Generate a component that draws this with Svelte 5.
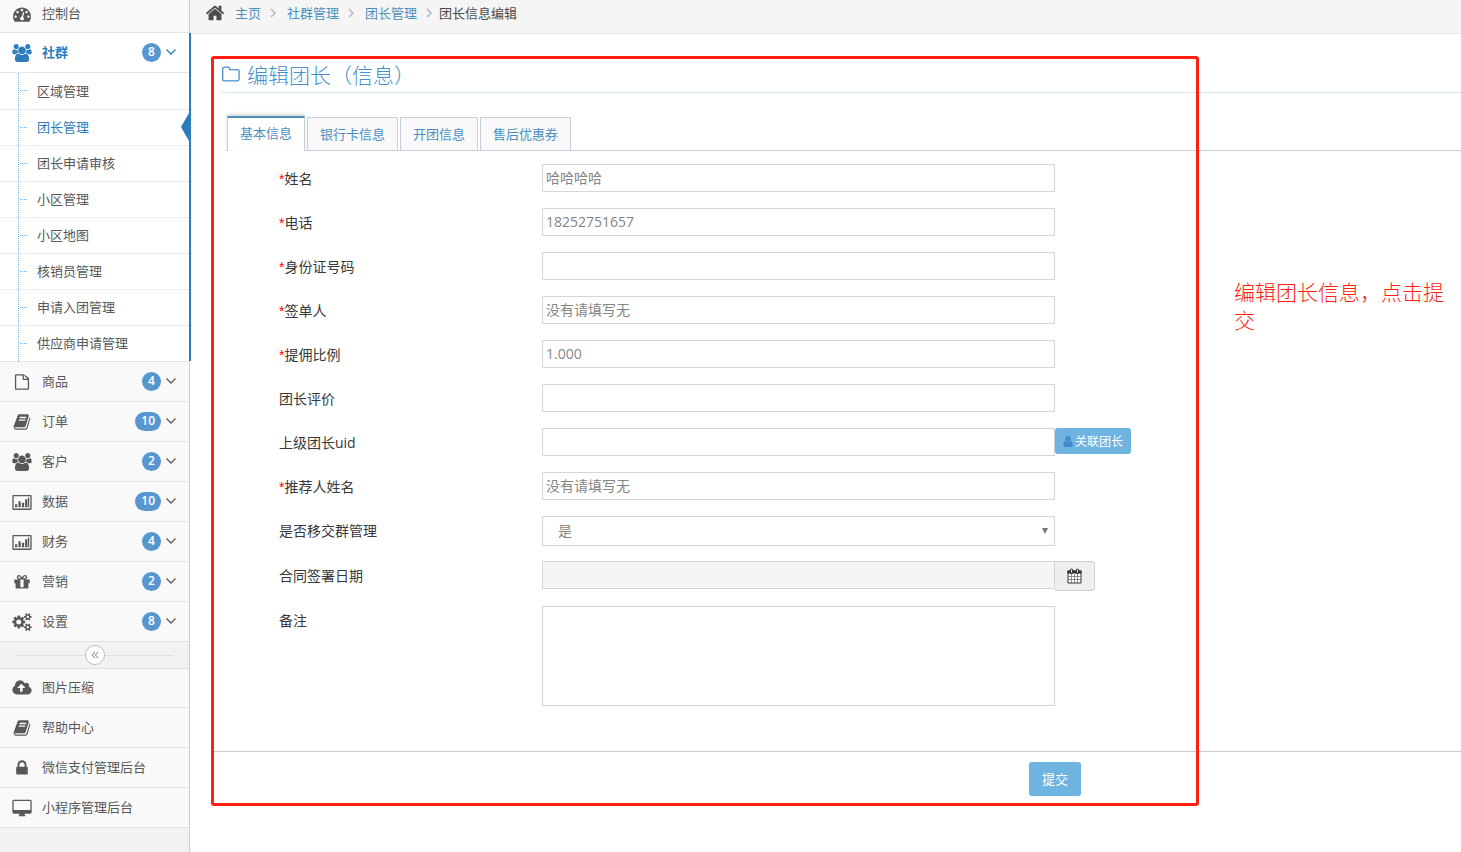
<script>
  const paths = {
    dashboard:
      'M384 1152q0-53-37.5-90.5t-90.5-37.5-90.5 37.5-37.5 90.5 37.5 90.5 90.5 37.5 90.5-37.5 37.5-90.5zm192-448q0-53-37.5-90.5t-90.5-37.5-90.5 37.5-37.5 90.5 37.5 90.5 90.5 37.5 90.5-37.5 37.5-90.5zm428 481l101-382q6-26-7.5-48.5t-38.5-29.5-48 6.5-30 39.5l-101 382q-60 5-107 43.5t-63 98.5q-20 77 20 146t117 89 146-20 89-117q16-60-6-117t-72-91zm660-33q0-53-37.5-90.5t-90.5-37.5-90.5 37.5-37.5 90.5 37.5 90.5 90.5 37.5 90.5-37.5 37.5-90.5zm-640-640q0-53-37.5-90.5t-90.5-37.5-90.5 37.5-37.5 90.5 37.5 90.5 90.5 37.5 90.5-37.5 37.5-90.5zm448 192q0-53-37.5-90.5t-90.5-37.5-90.5 37.5-37.5 90.5 37.5 90.5 90.5 37.5 90.5-37.5 37.5-90.5zm320 448q0 261-141 483-19 29-54 29h-1402q-35 0-54-29-141-221-141-483 0-182 71-348t191-286 286-191 348-71 348 71 286 191 191 286 71 348z',
    group:
      'M593 896q-162 5-265 128h-134q-82 0-138-40.5t-56-118.5q0-353 124-353 6 0 43.5 21t97.5 42.5 119 21.5q67 0 133-23-5 37-5 66 0 159 81 256zm1071 637q0 120-73 189.5t-194 69.5h-874q-121 0-194-69.5t-73-189.5q0-53 3.5-103.5t14-109 26.5-108.5 43-97.5 62-81 85.5-53.5 111.5-20q10 0 43 21.5t73 48 107 48 135 21.5 135-21.5 107-48 73-48 43-21.5q61 0 111.5 20t85.5 53.5 62 81 43 97.5 26.5 108.5 14 109 3.5 103.5zm-1024-1277q0 106-75 181t-181 75-181-75-75-181 75-181 181-75 181 75 75 181zm704 384q0 159-112.5 271.5t-271.5 112.5-271.5-112.5-112.5-271.5 112.5-271.5 271.5-112.5 271.5 112.5 112.5 271.5zm576 225q0 78-56 118.5t-138 40.5h-134q-103-123-265-128 81-97 81-256 0-29-5-66 66 23 133 23 59 0 119-21.5t97.5-42.5 43.5-21q124 0 124 353zm-128-609q0 106-75 181t-181 75-181-75-75-181 75-181 181-75 181 75 75 181z',
    file:
      'M1532 444q28 28 48 76t20 88v960q0 40-28 68t-68 28h-1216q-40 0-68-28t-28-68v-1344q0-40 28-68t68-28h704q40 0 88 20t76 48zm-444-180v312h312q-10-29-22-41l-249-249q-12-12-41-22zm384 1272v-832h-416q-40 0-68-28t-28-68v-352h-640v1280h1152z',
    book:
      'M1703 478q40 57 18 129l-275 906q-19 64-76.5 107.5t-122.5 43.5h-923q-77 0-148.5-53.5t-99.5-131.5q-24-67-2-127 0-4 3-27t4-37q1-8-3-21.5t-3-19.5q2-11 8-21t16.5-23.5 16.5-23.5q23-38 45-91.5t30-91.5q3-10 .5-30t-.5-28q3-11 17-28t17-23q21-36 42-92t25-90q1-9-2.5-32t.5-28q4-13 22-30.5t22-22.5q19-26 42.5-84.5t27.5-96.5q1-8-3-25.5t-2-26.5q2-8 9-18t18-23 17-21q8-12 16.5-30.5t15-35 16-36 19.5-32 26.5-23.5 36-11.5 47.5 5.5l-1 3q38-9 51-9h761q74 0 114 56t18 130l-274 906q-36 119-71.5 153.5t-128.5 34.5h-869q-27 0-38 15-11 16-1 43 24 70 144 70h923q29 0 56-15.5t35-41.5l300-987q7-22 5-57 38 15 59 43zm-1064 2q-4 13 2 22.5t20 9.5h608q13 0 25.5-9.5t16.5-22.5l21-64q4-13-2-22.5t-20-9.5h-608q-13 0-25.5 9.5t-16.5 22.5zm-83 256q-4 13 2 22.5t20 9.5h608q13 0 25.5-9.5t16.5-22.5l21-64q4-13-2-22.5t-20-9.5h-608q-13 0-25.5 9.5t-16.5 22.5z',
    chart:
      'M100 190h1720q100 0 100 100v1290q0 100-100 100h-1720q-100 0-100-100v-1290q0-100 100-100zm30 130v1230h1660v-1230zM270 1130h220v290h-220zM610 830h220v590h-220zM950 980h220v440h-220zM1270 620h220v800h-220zM1550 440h130v980h-130z',
    gift:
      'M1056 1356v-716h-320v716q0 25 18 38.5t46 13.5h192q28 0 46-13.5t18-38.5zm-456-844h195l-126-161q-26-31-69-31-40 0-68 28t-28 68 28 68 68 28zm688-96q0-40-28-68t-68-28q-43 0-69 31l-125 161h194q40 0 68-28t28-68zm376 256v320q0 14-9 23t-23 9h-96v416q0 40-28 68t-68 28h-1088q-40 0-68-28t-28-68v-416h-96q-14 0-23-9t-9-23v-320q0-14 9-23t23-9h440q-93 0-158.5-65.5t-65.5-158.5 65.5-158.5 158.5-65.5q107 0 168 77l128 165 128-165q61-77 168-77 93 0 158.5 65.5t65.5 158.5-65.5 158.5-158.5 65.5h440q14 0 23 9t9 23z',
    cogs:
      'M896 896q0-106-75-181t-181-75-181 75-75 181 75 181 181 75 181-75 75-181zm768 512q0-52-38-90t-90-38-90 38-38 90q0 53 37.5 90.5t90.5 37.5 90.5-37.5 37.5-90.5zm0-1024q0-52-38-90t-90-38-90 38-38 90q0 53 37.5 90.5t90.5 37.5 90.5-37.5 37.5-90.5zm-384 421v185q0 10-7 19.5t-16 10.5l-155 24q-11 35-32 76 34 48 90 115 7 11 7 20 0 12-7 19-23 30-82.5 89.5t-78.5 59.5q-11 0-21-7l-115-90q-37 19-77 31-11 108-23 155-7 24-30 24h-186q-11 0-20-7.5t-10-17.5l-23-153q-34-10-75-31l-118 89q-7 7-20 7-11 0-21-8-144-133-144-160 0-9 7-19 10-14 41-53t47-61q-23-44-35-82l-152-24q-10-1-17-9.5t-7-19.5v-185q0-10 7-19.5t16-10.5l155-24q11-35 32-76-34-48-90-115-7-11-7-20 0-12 7-20 22-30 82-89t79-59q11 0 21 7l115 90q34-18 77-32 11-108 23-154 7-24 30-24h186q11 0 20 7.5t10 17.5l23 153q34 10 75 31l118-89q8-7 20-7 11 0 21 8 144 133 144 160 0 9-7 19-12 16-42 54t-45 60q23 48 34 82l152 23q10 2 17 10.5t7 19.5zm640 533v140q0 16-149 31-12 27-30 52 51 113 51 138 0 4-4 7-122 71-124 71-8 0-46-47t-52-68q-20 2-30 2t-30-2q-14 21-52 68t-46 47q-2 0-124-71-4-3-4-7 0-25 51-138-18-25-30-52-149-15-149-31v-140q0-16 149-31 13-29 30-52-51-113-51-138 0-4 4-7 4-2 35-20t59-34 30-16q8 0 46 46.5t52 67.5q20-2 30-2t30 2q51-71 92-112l6-2q4 0 124 70 4 3 4 7 0 25-51 138 17 23 30 52 149 15 149 31zm0-1024v140q0 16-149 31-12 27-30 52 51 113 51 138 0 4-4 7-122 71-124 71-8 0-46-47t-52-68q-20 2-30 2t-30-2q-14 21-52 68t-46 47q-2 0-124-71-4-3-4-7 0-25 51-138-18-25-30-52-149-15-149-31v-140q0-16 149-31 13-29 30-52-51-113-51-138 0-4 4-7 4-2 35-20t59-34 30-16q8 0 46 46.5t52 67.5q20-2 30-2t30 2q51-71 92-112l6-2q4 0 124 70 4 3 4 7 0 25-51 138 17 23 30 52 149 15 149 31z',
    cloud:
      'M1280 864q0-14-9-23l-352-352q-9-9-23-9t-23 9l-351 351q-10 12-10 24 0 14 9 23t23 9h224v352q0 13 9.5 22.5t22.5 9.5h192q13 0 22.5-9.5t9.5-22.5v-352h224q13 0 22.5-9.5t9.5-22.5zm640 288q0 159-112.5 271.5t-271.5 112.5h-1088q-185 0-316.5-131.5t-131.5-316.5q0-130 70-240t188-165q-2-30-2-43 0-212 150-362t362-150q156 0 285.5 87t188.5 231q71-62 166-62 106 0 181 75t75 181q0 76-41 138 130 31 213.5 135.5t83.5 238.5z',
    lock:
      'M640 768h512v-192q0-106-75-181t-181-75-181 75-75 181v192zm832 96v576q0 40-28 68t-68 28h-960q-40 0-68-28t-28-68v-576q0-40 28-68t68-28h32v-192q0-184 132-316t316-132 316 132 132 316v192h32q40 0 68 28t28 68z',
    desktop:
      'M1792 1056v-832q0-13-9.5-22.5t-22.5-9.5h-1600q-13 0-22.5 9.5t-9.5 22.5v832q0 13 9.5 22.5t22.5 9.5h1600q13 0 22.5-9.5t9.5-22.5zm128-832v1088q0 66-47 113t-113 47h-544q0 37 16 77.5t32 71 16 43.5q0 26-19 45t-45 19h-512q-26 0-45-19t-19-45q0-14 16-44t32-70 16-78h-544q-66 0-113-47t-47-113v-1088q0-66 47-113t113-47h1600q66 0 113 47t47 113z',
    home:
      'M1472 992v480q0 26-19 45t-45 19h-384v-384h-256v384h-384q-26 0-45-19t-19-45v-480q0-1 .5-3t.5-3l575-474 575 474q1 2 1 6zm223-69l-62 74q-8 9-21 11h-3q-13 0-21-7l-692-577-692 577q-12 8-24 7-13-2-21-11l-62-74q-8-10-7-23.5t11-21.5l719-599q32-26 76-26t76 26l244 204v-195q0-14 9-23t23-9h192q14 0 23 9t9 23v408l219 182q10 8 11 21.5t-7 23.5z',
    user:
      'M1536 1399q0 109-62.5 187t-150.5 78h-854q-88 0-150.5-78t-62.5-187q0-85 8.5-160.5t31.5-152 58.5-131 94-89 134.5-34.5q131 128 313 128t313-128q76 0 134.5 34.5t94 89 58.5 131 31.5 152 8.5 160.5zm-256-887q0 159-112.5 271.5t-271.5 112.5-271.5-112.5-112.5-271.5 112.5-271.5 271.5-112.5 271.5 112.5 112.5 271.5z'
  };
  const wide = ['group', 'chart', 'cogs', 'cloud', 'desktop'];

  const community = ['区域管理', '团长管理', '团长申请审核', '小区管理', '小区地图', '核销员管理', '申请入团管理', '供应商申请管理'];
  const modules = [
    { icon: 'file', text: '商品', count: 4 },
    { icon: 'book', text: '订单', count: 10 },
    { icon: 'group', text: '客户', count: 2 },
    { icon: 'chart', text: '数据', count: 10 },
    { icon: 'chart', text: '财务', count: 4 },
    { icon: 'gift', text: '营销', count: 2 },
    { icon: 'cogs', text: '设置', count: 8 }
  ];
  const tools = [
    { icon: 'cloud', text: '图片压缩' },
    { icon: 'book', text: '帮助中心' },
    { icon: 'lock', text: '微信支付管理后台' },
    { icon: 'desktop', text: '小程序管理后台' }
  ];
  const tabs = ['基本信息', '银行卡信息', '开团信息', '售后优惠券'];
  let activeTab = $state(0);

  let fields = $state([
    { id: 'name', label: '姓名', required: true, value: '哈哈哈哈' },
    { id: 'phone', label: '电话', required: true, value: '18252751657' },
    { id: 'idcard', label: '身份证号码', required: true, value: '' },
    { id: 'signer', label: '签单人', required: true, value: '没有请填写无' },
    { id: 'rate', label: '提佣比例', required: true, value: '1.000' },
    { id: 'review', label: '团长评价', required: false, value: '' },
    { id: 'parent', label: '上级团长uid', required: false, value: '', link: true },
    { id: 'referrer', label: '推荐人姓名', required: true, value: '没有请填写无' }
  ]);
</script>

{#snippet icon(name)}
  <svg class="icon" viewBox={wide.includes(name) ? '0 0 1920 1792' : '-64 0 1920 1792'} aria-hidden="true">
    <path d={paths[name]} fill="currentColor" fill-rule={name === 'chart' ? 'evenodd' : 'nonzero'} />
  </svg>
{/snippet}

{#snippet entry(name, text, count)}
  <a class="entry" href="#top">
    {@render icon(name)}
    <span class="entry-text">{text}</span>
    {#if count}
      <span class="badge">{count}</span>
      <svg class="arrow" viewBox="0 0 12 10" aria-hidden="true"><path d="M1.500 1.500L6 6l4.500-4.500" fill="none" stroke="currentColor" stroke-width="1.300" /></svg>
    {/if}
  </a>
{/snippet}

<div class="page" id="top">
  <nav class="sidebar">
    <ul class="menu">
      <li class="first">{@render entry('dashboard', '控制台')}</li>
      <li class="open">
        {@render entry('group', '社群', 8)}
        <ul class="submenu">
          {#each community as text, i}
            <li class:current={i === 1}><a href="#top">{text}</a></li>
          {/each}
        </ul>
      </li>
      {#each modules as m}
        <li>{@render entry(m.icon, m.text, m.count)}</li>
      {/each}
    </ul>
    <div class="collapse">
      <button type="button" aria-label="收起菜单">
        <svg viewBox="0 0 10 10" aria-hidden="true"><path d="M5 1L1.500 5L5 9M9 1L5.500 5L9 9" fill="none" stroke="#999" stroke-width="1.3" /></svg>
      </button>
    </div>
    <ul class="menu tools">
      {#each tools as t}
        <li>{@render entry(t.icon, t.text)}</li>
      {/each}
    </ul>
  </nav>

  <div class="main">
    <nav class="crumbs">
      {@render icon('home')}
      {#each ['主页', '社群管理', '团长管理'] as text}
        <a href="#top">{text}</a>
        <svg class="sep" viewBox="0 0 6 10" aria-hidden="true"><path d="M1 1l4 4-4 4" fill="none" stroke="#b2b6bf" stroke-width="1.5" /></svg>
      {/each}
      <span>团长信息编辑</span>
    </nav>

    <main class="content">
      <h1>
        <svg class="folder" viewBox="0 0 18 16" aria-hidden="true">
          <path d="M.7 13V3q0-1.800 1.800-1.800h3.500q1.700 0 1.700 1.800v.6h7.600q1.800 0 1.800 1.800V13q0 1.800-1.800 1.800H2.500Q.7 14.800.7 13z" fill="none" stroke="currentColor" stroke-width="1.300" />
        </svg>
        <span>编辑团长（信息）</span>
      </h1>

      <div class="tabs" role="tablist">
        {#each tabs as tab, i}
          <button type="button" role="tab" aria-selected={activeTab === i} class:active={activeTab === i} onclick={() => (activeTab = i)}>{tab}</button>
        {/each}
      </div>

      <form onsubmit={(e) => e.preventDefault()}>
        <div class="rows">
          {#each fields as f}
            <div class="row">
              <label for={f.id}>{#if f.required}<i>*</i>{/if}{f.label}</label>
              <input id={f.id} type="text" bind:value={f.value} />
              {#if f.link}
                <div><button class="link" type="button">{@render icon('user')}关联团长</button></div>
              {/if}
            </div>
          {/each}
        </div>
        <div class="rows compact">
          <div class="row">
            <label for="handover">是否移交群管理</label>
            <div class="select">
              <select id="handover"><option>是</option><option>否</option></select>
            </div>
          </div>
          <div class="row">
            <label for="date">合同签署日期</label>
            <input id="date" type="text" readonly />
            <div>
              <button class="addon" type="button" aria-label="选择日期">
                <svg viewBox="0 0 15 16" aria-hidden="true">
                  <path d="M1 3h13v12H1z" fill="#fff" stroke="#333" />
                  <path d="M.5 2.500h14v3H.5z" fill="#333" />
                  <path d="M4.500 2v2.500M10.500 2v2.500" stroke="#333" stroke-width="3" stroke-linecap="round" />
                  <path d="M4.500 1.500v3M10.500 1.500v3" stroke="#eee" stroke-width="1" />
                  <path d="M4.500 6v9M7.500 6v9M10.500 6v9M1 8.500h13M1 11.500h13" stroke="#666" stroke-width=".7" />
                </svg>
              </button>
            </div>
          </div>
          <div class="row">
            <label for="remark">备注</label>
            <textarea id="remark"></textarea>
          </div>
        </div>
        <div class="actions">
          <button class="submit" type="submit">提交</button>
        </div>
      </form>

      <div class="frame" aria-hidden="true"></div>
      <p class="note">编辑团长信息，点击提交</p>
    </main>
  </div>
</div>

<style>
  :global(body) {
    margin: 0;
    background: #fff;
    color: #393939;
    font: 13px/20px 'Open Sans', 'Noto Sans CJK SC', sans-serif;
  }
  * {
    box-sizing: border-box;
  }
  a {
    color: inherit;
    text-decoration: none;
  }
  ul {
    list-style: none;
    margin: 0;
    padding: 0;
  }
  button,
  input,
  select,
  textarea {
    font: inherit;
    margin: 0;
  }
  button {
    cursor: pointer;
  }
  .page {
    display: flex;
    min-height: 100vh;
  }

  .sidebar {
    flex: 0 0 190px;
    background: #f2f2f2;
    border-right: 1px solid #ccc;
    color: #585858;
  }
  .icon {
    width: 20px;
    height: 18px;
    flex: none;
  }
  .menu > li {
    border-top: 1px solid #e5e5e5;
    background: #f9f9f9;
  }
  .entry {
    display: flex;
    align-items: center;
    height: 39px;
    padding: 0 12px;
  }
  .entry-text {
    flex: 1;
    margin-left: 10px;
    padding-bottom: 2px;
  }
  .badge {
    min-width: 19px;
    height: 19px;
    padding: 0 6px;
    border-radius: 10px;
    background: #5896cf;
    color: #fff;
    font-size: 12px;
    font-weight: 600;
    line-height: 18px;
    text-align: center;
  }
  .arrow {
    width: 12px;
    height: 10px;
    margin-left: 4px;
  }
  .menu > .first {
    border-top: 0;
  }
  .first .entry {
    height: 32px;
    padding-bottom: 5px;
  }
  .menu > .open {
    position: relative;
    background: #fff;
  }
  .open::after {
    content: '';
    position: absolute;
    top: 0;
    bottom: 0;
    right: -2px;
    width: 2px;
    background: #2b7dbc;
  }
  .open > .entry {
    color: #2b7dbc;
    font-weight: 700;
  }
  .submenu {
    position: relative;
    border-top: 1px solid #e5e5e5;
  }
  .submenu::before {
    content: '';
    position: absolute;
    top: 0;
    bottom: 0;
    left: 18px;
    border-left: 1px dotted #7fb0d5;
  }
  .submenu li {
    position: relative;
    height: 36px;
    padding: 8px 0 0 37px;
  }
  .submenu li + li {
    border-top: 1px dotted #ddd;
    padding-top: 7px;
  }
  .submenu li::before {
    content: '';
    position: absolute;
    left: 20px;
    top: 17px;
    width: 7px;
    border-top: 1px dotted #7fb0d5;
  }
  .submenu .current {
    color: #2b7dbc;
  }
  .submenu .current::after {
    content: '';
    position: absolute;
    right: 0;
    top: 3px;
    border: 14px solid transparent;
    border-width: 14px 8px 14px 0;
    border-right-color: #2b7dbc;
  }
  .collapse {
    display: flex;
    align-items: center;
    justify-content: center;
    height: 28px;
    border: solid #e0e0e0;
    border-width: 1px 0;
    background: linear-gradient(#e0e0e0, #e0e0e0) center / calc(100% - 30px) 1px no-repeat;
  }
  .collapse button {
    display: flex;
    align-items: center;
    justify-content: center;
    width: 20px;
    height: 20px;
    padding: 0;
    border: 1px solid #bbb;
    border-radius: 50%;
    background: #fff;
  }
  .collapse svg {
    width: 8px;
    height: 8px;
  }
  .tools > li {
    border-top: 0;
    border-bottom: 1px solid #e5e5e5;
  }
  .tools > li:first-child .entry {
    height: 38px;
  }

  .main {
    flex: 1;
    min-width: 0;
  }
  .crumbs {
    display: flex;
    align-items: center;
    height: 34px;
    padding: 0 14px 7px;
    border-bottom: 1px solid #e5e5e5;
    background: #f5f5f5;
    color: #4c4c4c;
  }
  .crumbs .icon {
    width: 22px;
    height: 20px;
  }
  .crumbs a {
    color: #4c8fbd;
    margin-left: 9px;
  }
  .crumbs .sep {
    width: 6px;
    height: 10px;
    margin-left: 9px;
  }
  .crumbs .sep + a {
    margin-left: 11px;
  }
  .crumbs .sep + span {
    margin-left: 7px;
  }
  .content {
    position: relative;
    padding: 26px 0 0 32px;
  }
  h1 {
    display: flex;
    align-items: center;
    gap: 7px;
    height: 33px;
    margin: 0;
    padding-bottom: 5px;
    border-bottom: 1px solid #d5e3ef;
    color: #478fca;
    font-family: 'Noto Sans CJK TC', sans-serif;
    font-size: 21px;
    font-weight: 300;
    line-height: 28px;
  }
  .folder {
    width: 18px;
    height: 16px;
  }
  .tabs {
    display: flex;
    align-items: flex-end;
    gap: 2px;
    height: 35px;
    margin: 23px 0 0 3px;
    padding-left: 2px;
    border-bottom: 1px solid #c5d0dc;
  }
  .tabs button {
    height: 33px;
    padding: 0 12px 1px;
    border: 1px solid #c5d0dc;
    border-bottom: 0;
    background: #f9f9f9;
    color: #4c8fbd;
  }
  .tabs .active {
    height: 35px;
    margin-bottom: -1px;
    padding-bottom: 3px;
    border-top: 2px solid #4c8fbd;
    background: #fff;
    box-shadow: 0 -2px 3px rgba(0, 0, 0, 0.15);
  }

  form {
    padding-top: 13px;
    font-size: 14px;
  }
  .rows {
    display: grid;
    gap: 16px;
    padding: 0 0 16px 57px;
  }
  .rows.compact {
    gap: 15px;
    padding-bottom: 45px;
  }
  .row {
    display: grid;
    grid-template-columns: 263fr 513fr 406fr;
    align-items: start;
  }
  label {
    line-height: 28px;
    padding-top: 1px;
    height: 28px;
  }
  label i {
    color: red;
    font-family: 'Liberation Sans', sans-serif;
    font-style: normal;
  }
  input,
  select,
  textarea {
    display: block;
    width: 100%;
    height: 28px;
    padding: 0 4px 2px 3px;
    border: 1px solid #d5d5d5;
    border-radius: 0;
    background: #fff;
    color: #858585;
  }
  input[readonly] {
    background: #f5f5f5;
  }
  textarea {
    height: 100px;
    resize: none;
  }
  .select {
    position: relative;
  }
  select {
    height: 30px;
    padding: 0 15px;
    appearance: none;
  }
  .select::after {
    content: '';
    position: absolute;
    right: 7px;
    top: 12px;
    border: 3px solid transparent;
    border-top: 6px solid #777;
    border-bottom: 0;
    pointer-events: none;
  }
  .link {
    display: flex;
    align-items: center;
    height: 26px;
    padding: 1px 8px 0 6px;
    border: 0;
    border-radius: 3px;
    background: #6fb3e0;
    color: #fff;
    font-size: 12px;
  }
  .link .icon {
    width: 14px;
    height: 13px;
    color: #428bca;
  }
  .addon {
    display: flex;
    align-items: center;
    justify-content: center;
    width: 40px;
    height: 30px;
    padding: 0;
    border: 1px solid #ccc;
    border-left: 0;
    border-radius: 0 4px 4px 0;
    background: #eee;
  }
  .addon svg {
    width: 15px;
    height: 16px;
  }
  .actions {
    display: flex;
    justify-content: flex-end;
    margin-left: -11px;
    padding: 10px 380px 0 0;
    border-top: 1px solid #ccc;
  }
  .submit {
    height: 34px;
    padding: 0 13px;
    border: 0;
    border-radius: 3px;
    background: #6fb3e0;
    color: #fff;
    font-size: 13px;
  }

  .frame {
    position: absolute;
    top: 22px;
    left: 21px;
    right: 262px;
    height: 750px;
    border: 3px solid #ff1e10;
    border-radius: 3px;
    pointer-events: none;
  }
  .note {
    position: absolute;
    top: 243px;
    right: 3px;
    width: 224px;
    margin: 0;
    color: #ff1e10;
    font-family: 'Noto Sans CJK SC', sans-serif;
    font-size: 21px;
    font-weight: 300;
    line-height: 28px;
  }
</style>
